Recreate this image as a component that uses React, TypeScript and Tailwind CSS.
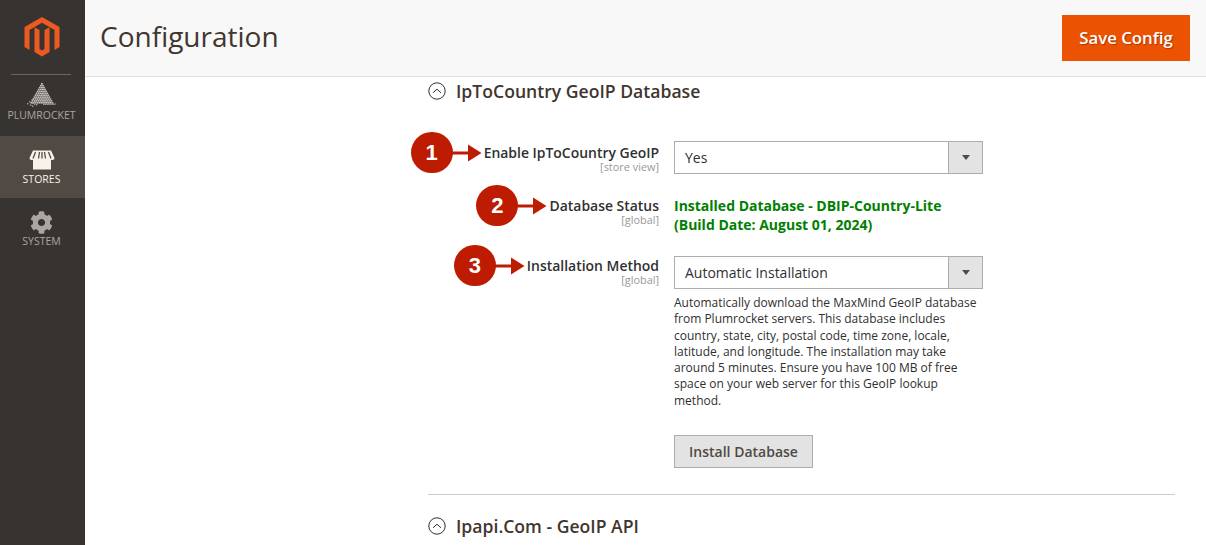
import React from "react";
import { FaCog } from "react-icons/fa";

function Logo() {
  return (
    <svg width="36" height="40" viewBox="0 0 36 40" className="block">
      <path fill="#eb5a20" d="M18 0 L35.5 10 V30 L30.5 33 V13 L18 5.8 L5.5 13 V33 L0.5 30 V10 Z" />
      <path fill="#eb5a20" d="M15.5 13 V32 L18 33.5 L20.5 32 V13 L25.5 10.2 V35 L18 39.5 L10.5 35 V10.2 Z" />
    </svg>
  );
}

function Pyramid() {
  const dots: React.ReactNode[] = [];
  for (let r = 0; r < 11; r++) {
    for (let c = 0; c <= r; c++) {
      const x = 14 - r * 1.05 + c * 2.1;
      const y = r * 1.9;
      dots.push(<rect key={`${r}-${c}`} x={x} y={y} width="1.8" height="1.6" fill="#c4c1bc" />);
    }
  }
  const rows = 11;
  for (let c = 0; c < 12; c++) {
    dots.push(<rect key={`b${c}`} x={16 + c * 1.05} y={rows * 1.9 - (c % 2) * 0.5} width="1.2" height="1.1" fill="#aaa6a0" />);
  }
  const extra = [[0, 20], [3, 21.5], [2, 18], [5, 19.5], [4.5, 16], [7, 17.5], [8, 14], [5, 22.5], [9, 21], [7, 20.5]];
  extra.forEach(([x, y], i) => dots.push(<rect key={`e${i}`} x={x} y={y} width="1.4" height="1.4" fill="#a5a19c" />));
  return (
    <svg width="30" height="24" viewBox="0 0 30 24" className="block">
      {dots}
    </svg>
  );
}

function Store() {
  return (
    <svg width="26" height="20" viewBox="0 0 26 20" className="block">
      <path fill="#f7f3eb" d="M4 0.5 H22 L25.5 8 C25.5 10 23 10.5 22 9.8 V19.5 H4 V9.8 C3 10.5 0.5 10 0.5 8 Z" />
      <path stroke="#514c47" strokeWidth="1.3" fill="none" d="M6.5 2 L4 8.5 M10.5 2 L9.5 8.5 M13 2 V8.5 M15.5 2 L16.5 8.5 M19.5 2 L22 8.5" />
    </svg>
  );
}

function Chevron() {
  return (
    <svg width="18" height="18" viewBox="0 0 18 18" className="block shrink-0">
      <circle cx="9" cy="9" r="8.2" fill="none" stroke="#303030" strokeWidth="1" />
      <path d="M5 10.8 L9 7.2 L13 10.8" fill="none" stroke="#303030" strokeWidth="1" />
    </svg>
  );
}

function Badge({ n }: { n: string }) {
  return (
    <div className="absolute right-full top-[-12px] mr-[2px] flex items-center">
      <div className="w-[42px] h-[41px] rounded-full bg-[#bd1c02] text-white flex items-center justify-center text-[22px] font-bold font-['Liberation_Sans',sans-serif]">
        {n}
      </div>
      <svg width="30" height="18" viewBox="0 0 30 18" className="block -ml-[1px]">
        <rect x="0" y="7.5" width="17" height="3" fill="#bd1c02" />
        <path d="M16 0.5 L29.5 9 L16 17.5 Z" fill="#bd1c02" />
      </svg>
    </div>
  );
}

function Select({ value }: { value: string }) {
  return (
    <div className="w-[309px] h-[33px] border border-[#adadad] bg-white flex items-stretch">
      <div className="flex-1 pl-[10px] text-[14px] leading-[31px] text-[#303030]">{value}</div>
      <div className="w-[34px] bg-[#e3e3e3] border-l border-[#adadad] flex items-center justify-center">
        <div className="w-0 h-0 border-l-[4px] border-r-[4px] border-t-[5px] border-l-transparent border-r-transparent border-t-[#514943]" />
      </div>
    </div>
  );
}

function Label({ text, scope, badge }: { text: string; scope: string; badge: React.ReactNode }) {
  return (
    <div className="w-[231px] shrink-0 text-right pt-px">
      <div className="text-[13.95px] leading-[17px] font-semibold text-[#303030]">
        <span className="relative inline-block">
          {badge}
          {text}
        </span>
      </div>
      <div className="text-[10.9px] leading-[12px] text-[#999999]">{scope}</div>
    </div>
  );
}

function NavItem({ icon, label, active }: { icon: React.ReactNode; label: string; active?: boolean }) {
  return (
    <div className={`h-[62px] flex flex-col items-center pr-[2px] ${active ? "bg-[#514943] text-[#f7f3eb]" : "text-[#aaa6a0]"}`}>
      <div className="h-[24px] mt-[12px] flex items-center justify-center">{icon}</div>
      <div className="text-[10.5px] leading-[14px] font-medium">{label}</div>
    </div>
  );
}

export default function App() {
  return (
    <div className="w-[1206px] h-[545px] overflow-hidden flex bg-white font-['Open_Sans',sans-serif]">
      <aside className="w-[85px] shrink-0 bg-[#373330] flex flex-col">
        <div className="h-[75px] px-[11px] pt-[17px]">
          <div className="flex justify-center -ml-[1px]"><Logo /></div>
          <div className="mt-[17px] h-px bg-[#6b6560] w-[60px]" />
        </div>
        <div className="h-[61px] flex flex-col items-center text-[#aaa6a0] pr-[2px]">
          <div className="mt-[8px]"><Pyramid /></div>
          <div className="text-[10.5px] leading-[14px] mt-[1px]">PLUMROCKET</div>
        </div>
        <NavItem active label="STORES" icon={<Store />} />
        <NavItem label="SYSTEM" icon={<FaCog size={23} color="#aaa6a0" />} />
      </aside>
      <main className="flex-1 min-w-0 flex flex-col">
        <header className="h-[77px] shrink-0 bg-[#f8f8f8] border-b border-[#e3e3e3] flex items-center justify-between pl-[15px] pr-[16px]">
          <h1 className="text-[28px] leading-[36px] font-normal text-[#41362f] -mt-[5px]">Configuration</h1>
          <button className="w-[128px] h-[46px] bg-[#eb5202] text-white text-[16.8px] font-semibold [text-shadow:1px_1px_1px_rgba(0,0,0,0.3)]">
            Save Config
          </button>
        </header>
        <div className="ml-[343px] w-[747px]">
          <div className="flex items-center gap-[10px] h-[28px]">
            <Chevron />
            <h2 className="text-[17.6px] leading-[28px] font-semibold text-[#41362f]">IpToCountry GeoIP Database</h2>
          </div>
          <div className="flex gap-[15px] mt-[36px]">
            <div className="pt-[2px] shrink-0"><Label text="Enable IpToCountry GeoIP" scope="[store view]" badge={<Badge n="1" />} /></div>
            <Select value="Yes" />
          </div>
          <div className="flex gap-[15px] mt-[22px]">
            <div className="shrink-0"><Label text="Database Status" scope="[global]" badge={<Badge n="2" />} /></div>
            <div className="text-[14px] leading-[19px] font-bold text-[#008000]">
              Installed Database - DBIP-Country-Lite<br />(Build Date: August 01, 2024)
            </div>
          </div>
          <div className="flex gap-[15px] mt-[22px]">
            <div className="shrink-0"><Label text="Installation Method" scope="[global]" badge={<Badge n="3" />} /></div>
            <div className="w-[309px]">
              <Select value="Automatic Installation" />
              <p className="mt-[6px] text-[12px] leading-[16.3px] text-[#303030]">
                Automatically download the MaxMind GeoIP database from Plumrocket servers. This database includes country, state, city, postal code, time zone, locale, latitude, and longitude. The installation may take around 5 minutes. Ensure you have 100 MB of free space on your web server for this GeoIP lookup method.
              </p>
              <button className="mt-[26px] w-[139px] h-[33px] bg-[#e3e3e3] border border-[#adadad] text-[14px] font-semibold text-[#514943]">
                Install Database
              </button>
            </div>
          </div>
          <div className="mt-[26px] h-px bg-[#cccccc]" />
          <div className="flex items-center gap-[10px] h-[28px] mt-[17px]">
            <Chevron />
            <h2 className="text-[17.6px] leading-[28px] font-semibold text-[#41362f]">Ipapi.Com - GeoIP API</h2>
          </div>
        </div>
      </main>
    </div>
  );
}
